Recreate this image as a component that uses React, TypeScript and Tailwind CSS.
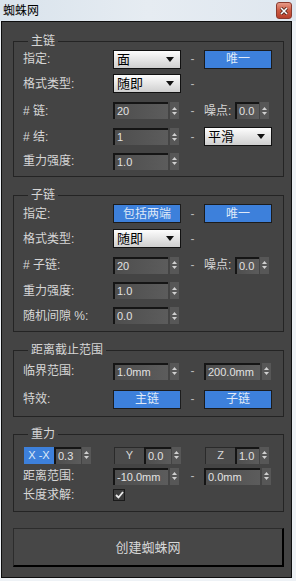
import type { ReactNode } from 'react'

function Caret() {
  return (
    <svg width="8" height="5" viewBox="0 0 8 5">
      <path d="M0 0h8L4 5z" fill="#111" />
    </svg>
  )
}

function Dropdown({ value }: { value: string }) {
  return (
    <div className="flex h-[19px] w-[68px] items-center justify-between border border-[#111] bg-linear-to-b from-[#fdfdfd] to-[#cfcfcf] pl-[3px] pr-[6px] text-[13px] leading-none text-black">
      <span>{value}</span>
      <Caret />
    </div>
  )
}

function Arrows({ gap = 'ml-[2px]' }: { gap?: string }) {
  return (
    <div className={`${gap} flex h-[17px] w-[9px] flex-col items-center justify-center gap-[2px] bg-[#575757]`}>
      <svg width="5" height="3" viewBox="0 0 5 3">
        <path d="M2.5 0L5 3H0z" fill="#d0d0d0" />
      </svg>
      <svg width="5" height="3" viewBox="0 0 5 3">
        <path d="M0 0h5L2.5 3z" fill="#d0d0d0" />
      </svg>
    </div>
  )
}

function Spinner({ value, field = 'w-[55px]', gap = 'ml-[2px]' }: { value: string; field?: string; gap?: string }) {
  return (
    <div className="flex items-center">
      <div className={`${field} flex h-[17px] items-center border-l-2 border-t-2 border-[#151515] bg-linear-to-r from-[#4e4e4e] to-[#5c5c5c] pl-[2px] text-[11px] leading-none text-[#e2e2e2]`}>
        {value}
      </div>
      <Arrows gap={gap} />
    </div>
  )
}

function BlueButton({ children }: { children: ReactNode }) {
  return (
    <div className="flex h-[19px] w-[68px] items-center justify-center border border-[#1c1c1c] bg-[#3d80db] text-[12px] leading-none text-[#dfe9f8]">
      {children}
    </div>
  )
}

function Dash() {
  return <div className="w-[23px] text-center text-[12px] text-[#b8b8b8]">-</div>
}

function Row({ h, label, children }: { h: string; label?: string; children?: ReactNode }) {
  return (
    <div className={`${h} flex items-center`}>
      <div className="w-[90px] shrink-0">{label}</div>
      {children}
    </div>
  )
}

function Group({ title, className, children }: { title: string; className: string; children: ReactNode }) {
  return (
    <fieldset className={`${className} border border-[#242424] pl-[9px]`}>
      <legend className="ml-[5px] px-[3px] text-[12px] leading-[14px]">{title}</legend>
      {children}
    </fieldset>
  )
}

function Noise() {
  return (
    <div className="flex items-center">
      <span className="w-[31px]">噪点:</span>
      <Spinner value="0.0" field="w-[24px]" gap="ml-[1px]" />
    </div>
  )
}

function AxisBox({ children, blue }: { children: ReactNode; blue?: boolean }) {
  return (
    <div
      className={
        blue
          ? 'flex h-[17px] w-[30px] items-center justify-center bg-[#3d80db] text-[11px] leading-none text-[#dfe9f8]'
          : 'flex h-[17px] w-[30px] items-center justify-center border-l border-t border-[#2a2a2a] bg-[#4b4b4b] text-[11px] leading-none text-[#d8d8d8]'
      }
    >
      {children}
    </div>
  )
}

export default function App() {
  return (
    <div className="flex h-[581px] w-[296px] flex-col bg-[#eef2f6] font-['Liberation_Sans','Noto_Sans_CJK_SC',sans-serif]">
      <div className="flex h-[21px] shrink-0 items-center justify-between bg-linear-to-r from-[#d9e3ec] via-[#e6ecf2] to-[#dfe7ef] pl-[3px] pr-[4px]">
        <span className="text-[12px] leading-none text-black">蜘蛛网</span>
        <div className="flex h-[17px] w-[16px] items-center justify-center rounded-[3px] border border-[#8a3a2e] bg-linear-to-b from-[#e69a88] via-[#cc5a42] to-[#b8402c]">
          <svg width="8" height="8" viewBox="0 0 8 8">
            <path d="M1 1l6 6M7 1L1 7" stroke="#3a1a14" strokeWidth="3" />
            <path d="M1 1l6 6M7 1L1 7" stroke="#fff" strokeWidth="1.6" />
          </svg>
        </div>
      </div>

      <div className="mb-[3px] ml-[1px] mr-[4px] flex flex-1 flex-col border border-[#0e0e0e] bg-[#444444] pl-[11px] pr-[7px] pt-[12px] text-[12px] leading-none text-[#d6d6d6]">
        <Group title="主链" className="pb-[3px]">
          <Row h="h-[22px]" label="指定:">
            <Dropdown value="面" />
            <Dash />
            <BlueButton>唯一</BlueButton>
          </Row>
          <Row h="h-[27px]" label="格式类型:">
            <Dropdown value="随即" />
            <Dash />
          </Row>
          <Row h="h-[27px]" label="# 链:">
            <div className="w-[68px]">
              <Spinner value="20" />
            </div>
            <Dash />
            <Noise />
          </Row>
          <Row h="h-[25px]" label="# 结:">
            <div className="w-[68px]">
              <Spinner value="1" />
            </div>
            <Dash />
            <Dropdown value="平滑" />
          </Row>
          <Row h="h-[24px]" label="重力强度:">
            <Spinner value="1.0" />
          </Row>
        </Group>

        <Group title="子链" className="mt-[11px] pb-[3px]">
          <Row h="h-[23px]" label="指定:">
            <BlueButton>包括两端</BlueButton>
            <Dash />
            <BlueButton>唯一</BlueButton>
          </Row>
          <Row h="h-[27px]" label="格式类型:">
            <Dropdown value="随即" />
            <Dash />
          </Row>
          <Row h="h-[26px]" label="# 子链:">
            <div className="w-[68px]">
              <Spinner value="20" />
            </div>
            <Dash />
            <Noise />
          </Row>
          <Row h="h-[25px]" label="重力强度:">
            <Spinner value="1.0" />
          </Row>
          <Row h="h-[25px]" label="随机间隙 %:">
            <Spinner value="0.0" />
          </Row>
        </Group>

        <Group title="距离截止范围" className="mt-[11px] pb-[3px]">
          <Row h="h-[28px]" label="临界范围:">
            <div className="w-[68px]">
              <Spinner value="1.0mm" />
            </div>
            <Dash />
            <Spinner value="200.0mm" field="w-[56px]" />
          </Row>
          <Row h="h-[28px]" label="特效:">
            <BlueButton>主链</BlueButton>
            <Dash />
            <BlueButton>子链</BlueButton>
          </Row>
        </Group>

        <Group title="重力" className="mt-[10px] pb-[6px] pt-[2px]">
          <div className="flex h-[24px] items-center pl-[1px]">
            <AxisBox blue>X -X</AxisBox>
            <Spinner value="0.3" field="w-[27px]" gap="ml-[1px]" />
            <div className="ml-[23px] flex items-center">
              <AxisBox>Y</AxisBox>
              <Spinner value="0.0" field="w-[27px]" gap="ml-[1px]" />
            </div>
            <div className="ml-[24px] flex items-center">
              <AxisBox>Z</AxisBox>
              <Spinner value="1.0" field="w-[24px]" gap="ml-[1px]" />
            </div>
          </div>
          <Row h="h-[18px]" label="距离范围:">
            <div className="w-[68px]">
              <Spinner value="-10.0mm" />
            </div>
            <Dash />
            <Spinner value="0.0mm" field="w-[56px]" />
          </Row>
          <Row h="h-[20px]" label="长度求解:">
            <div className="flex h-[12px] w-[12px] items-center justify-center border border-[#1a1a1a] bg-[#3c3c3c]">
              <svg width="9" height="8" viewBox="0 0 9 8">
                <path d="M1 4l2.5 2.5L8 1" stroke="#ececec" strokeWidth="1.8" fill="none" />
              </svg>
            </div>
          </Row>
        </Group>

        <button
          type="button"
          className="mt-[16px] flex h-[39px] items-center justify-center border border-[#2c2c2c] border-b-2 border-r-2 border-b-black border-r-black bg-[#474747] text-[13px] text-[#d8d8d8]"
        >
          创建蜘蛛网
        </button>
      </div>
    </div>
  )
}
